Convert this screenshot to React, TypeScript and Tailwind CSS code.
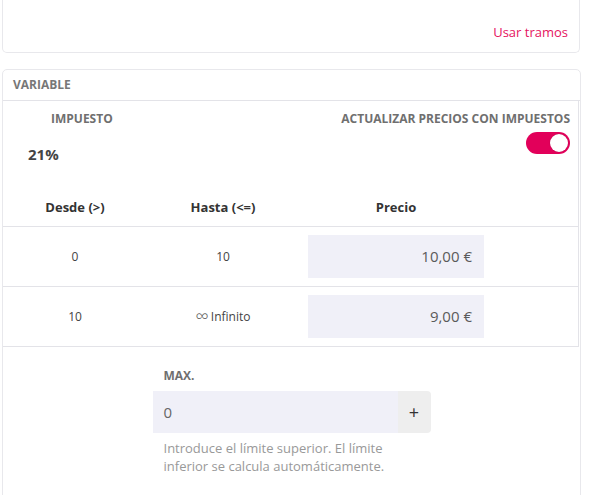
import React from "react";

export default function App() {
  return (
    <div
      className="w-[592px] h-[495px] overflow-hidden bg-white"
      style={{ fontFamily: '"Open Sans", "Noto Sans", sans-serif' }}
    >
      {/* top card */}
      <div className="ml-[2px] w-[578px] h-[53px] border border-t-0 border-[#e8e8ec] rounded-b-[5px] flex items-end justify-end pr-[11px] pb-[11px]">
        <span className="text-[13px] leading-[18px] text-[#e5135f]">Usar tramos</span>
      </div>

      {/* variable card */}
      <div className="ml-[2px] mt-[16px] w-[579px] border border-[#e8e8ec] rounded-t-[5px] pb-[40px]">
        <div className="h-[31px] flex items-center px-[10px] border-b border-[#e3e3e8]">
          <span className="text-[12px] font-bold text-[#777]">VARIABLE</span>
        </div>

        <div className="mr-[1px] border-r border-b border-[#e3e3e8]">
          {/* tax row */}
          <div className="flex justify-between h-[89px]">
            <div className="flex flex-col">
              <span className="pl-[48px] pt-[9px] text-[12px] leading-[18px] font-bold text-[#6f6f6f]">IMPUESTO</span>
              <span className="pl-[25px] pt-[16px] text-[15px] leading-[20px] font-bold text-[#444]">21%</span>
            </div>
            <div className="flex flex-col items-end pr-[8px]">
              <span className="pt-[9px] text-[12px] leading-[18px] font-bold text-[#6f6f6f]">
                ACTUALIZAR PRECIOS CON IMPUESTOS
              </span>
              <div className="mt-[4px] w-[44px] h-[22px] rounded-full bg-[#e2005a] flex items-center justify-end pr-[2px]">
                <div className="w-[18px] h-[18px] rounded-full bg-white shadow-[0_0_1px_rgba(0,0,0,0.3)]" />
              </div>
            </div>
          </div>

          {/* table header */}
          <div className="grid grid-cols-[144px_152px_194px_1fr] h-[36px] items-center text-[13px] font-bold text-[#333]">
            <span className="text-center">Desde (&gt;)</span>
            <span className="text-center">Hasta (&lt;=)</span>
            <span className="text-center">Precio</span>
            <span />
          </div>

          {/* rows */}
          {[
            { from: "0", to: "10", inf: false, price: "10,00 €" },
            { from: "10", to: "Infinito", inf: true, price: "9,00 €" },
          ].map((r, i) => (
            <div
              key={i}
              className="grid grid-cols-[144px_152px_194px_1fr] h-[60px] items-center border-t border-[#e3e3e8] text-[12px] text-[#444]"
            >
              <span className="text-center">{r.from}</span>
              <span className="text-center flex items-center justify-center gap-[2px]">
                {r.inf && <span className="text-[19px] leading-none text-[#555] font-light">∞</span>}
                {r.to}
              </span>
              <div className="px-[9px]">
                <div className="h-[43px] bg-[#f0f0f8] flex items-center justify-end pr-[12px] text-[15px] text-[#5a5a5a]">
                  {r.price}
                </div>
              </div>
              <span />
            </div>
          ))}
        </div>

        {/* MAX section */}
        <div className="w-[278px] mx-auto pt-[20px]">
          <div className="pl-[11px] text-[12px] leading-[18px] font-bold text-[#6f6f6f]">MAX.</div>
          <div className="mt-[6px] flex h-[42px]">
            <div className="flex-1 bg-[#f0f0f8] flex items-center pl-[11px] text-[15px] text-[#666]">0</div>
            <div className="w-[33px] bg-[#eeeeee] rounded-r-[4px] flex items-center justify-center text-[18px] text-[#333]">
              +
            </div>
          </div>
          <p className="mt-[6px] pl-[11px] pr-[10px] text-[13px] leading-[18px] text-[#999]">
            Introduce el límite superior. El límite inferior se calcula automáticamente.
          </p>
        </div>
      </div>
    </div>
  );
}
